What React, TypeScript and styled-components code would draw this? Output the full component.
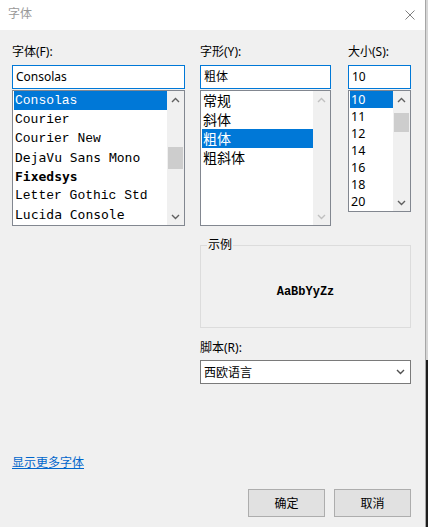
import React from 'react';
import styled, { createGlobalStyle } from 'styled-components';

const Global = createGlobalStyle`
  html, body { margin: 0; padding: 0; background: #f0f0f0; }
  body {
    font-family: "Noto Sans", "Noto Sans CJK SC", sans-serif;
    font-size: 12px;
    color: #000;
  }
  * { box-sizing: border-box; }
`;

const Page = styled.div`
  display: flex;
  width: 428px;
  height: 527px;
  overflow: hidden;
`;

const Dialog = styled.div`
  width: 425px;
  height: 527px;
  display: flex;
  flex-direction: column;
  background: #f0f0f0;
`;

const Backdrop = styled.div`
  width: 3px;
  display: flex;
  flex-direction: column;
  border-left: 1px solid #a6a6a6;
`;

const BackdropPart = styled.div<{ $dark?: boolean }>`
  height: ${(p) => (p.$dark ? 'auto' : '360px')};
  flex: ${(p) => (p.$dark ? 1 : 'none')};
  background: ${(p) => (p.$dark ? '#1e1e1e' : '#d6d6d6')};
`;

const TitleBar = styled.div`
  height: 30px;
  background: #fff;
  display: flex;
  align-items: center;
  justify-content: space-between;
  padding: 0 10px 0 8px;
`;

const Title = styled.span`
  color: #999;
  font-size: 12px;
  line-height: 16px;
  margin-top: -2px;
`;

const Body = styled.div`
  flex: 1;
  display: flex;
  flex-direction: column;
  padding: 0 14px 10px 12px;
`;

const Main = styled.div`
  display: flex;
  gap: 15px;
  margin-top: 14px;
`;

const Column = styled.div<{ $w: number }>`
  width: ${(p) => p.$w}px;
  display: flex;
  flex-direction: column;
`;

const Label = styled.div<{ $gap?: number }>`
  height: 16px;
  line-height: 16px;
  font-size: 12px;
  margin-bottom: ${(p) => p.$gap ?? 5}px;
  white-space: nowrap;
`;

const TextBox = styled.div`
  height: 24px;
  border: 1px solid #0078d7;
  background: #fff;
  padding: 0 3px;
  line-height: 22px;
  font-size: 12px;
`;

const ListBox = styled.div<{ $h: number }>`
  margin-top: 1px;
  height: ${(p) => p.$h}px;
  border: 1px solid #828790;
  background: #fff;
  display: flex;
`;

const Items = styled.div`
  flex: 1;
  padding: 0 0 0 1px;
  overflow: hidden;
`;

const Item = styled.div<{
  $h: number;
  $sel?: boolean;
  $font?: string;
  $weight?: number;
  $size?: number;
}>`
  height: ${(p) => p.$h}px;
  line-height: ${(p) => p.$h}px;
  padding-left: 1px;
  white-space: nowrap;
  overflow: hidden;
  font-family: ${(p) => p.$font ?? '"Noto Sans", "Noto Sans CJK SC", sans-serif'};
  font-weight: ${(p) => p.$weight ?? 400};
  font-size: ${(p) => p.$size ?? 12}px;
  background: ${(p) => (p.$sel ? '#0078d7' : 'transparent')};
  color: ${(p) => (p.$sel ? '#fff' : '#000')};
`;

const ScrollBar = styled.div`
  width: 17px;
  display: flex;
  flex-direction: column;
  background: #f0f0f0;
`;

const ArrowBox = styled.div`
  height: 17px;
  display: flex;
  align-items: center;
  justify-content: center;
`;

const Track = styled.div`
  flex: 1;
`;

const Thumb = styled.div<{ $top: number; $h: number }>`
  margin: ${(p) => p.$top}px 1px 0;
  height: ${(p) => p.$h}px;
  background: #cdcdcd;
`;

const Chevron: React.FC<{ up?: boolean; color: string }> = ({ up, color }) => (
  <svg width="9" height="6" viewBox="0 0 9 6">
    <path
      d={up ? 'M1 5 L4.5 1.5 L8 5' : 'M1 1 L4.5 4.5 L8 1'}
      fill="none"
      stroke={color}
      strokeWidth="1.4"
    />
  </svg>
);

const Scroller: React.FC<{ thumb?: { top: number; h: number } }> = ({ thumb }) => {
  const c = thumb ? '#606060' : '#c0c0c0';
  return (
    <ScrollBar>
      <ArrowBox>
        <Chevron up color={c} />
      </ArrowBox>
      <Track>{thumb && <Thumb $top={thumb.top} $h={thumb.h} />}</Track>
      <ArrowBox>
        <Chevron color={c} />
      </ArrowBox>
    </ScrollBar>
  );
};

const RightBlock = styled.div`
  width: 211px;
  display: flex;
  flex-direction: column;
`;

const TopRow = styled.div`
  display: flex;
  gap: 17px;
  align-items: flex-start;
`;

const Group = styled.fieldset`
  margin: 11px 0 0;
  padding: 0;
  border: 1px solid #dcdcdc;
  min-width: 0;
`;

const Legend = styled.legend`
  margin-left: 6px;
  padding: 0 1px;
  line-height: 16px;
  font-size: 12px;
`;

const SampleArea = styled.div`
  height: 74px;
  display: flex;
  align-items: center;
  justify-content: center;
  padding-top: 4px;
  font-family: "Liberation Mono", "DejaVu Sans Mono", monospace;
  font-weight: 700;
  font-size: 12px;
`;

const ScriptLabel = styled(Label)`
  margin-top: 12px;
`;

const Select = styled.div`
  height: 24px;
  border: 1px solid #7a7a7a;
  background: #fff;
  display: flex;
  align-items: center;
  justify-content: space-between;
  padding: 0 5px 0 3px;
  font-size: 12px;
`;

const LinkRow = styled.div`
  margin-top: 71px;
  line-height: 16px;
  height: 16px;
`;

const Link = styled.a`
  color: #0066cc;
  text-decoration: underline;
  font-size: 12px;
  cursor: pointer;
`;

const ButtonRow = styled.div`
  margin-top: 18px;
  display: flex;
  justify-content: flex-end;
  gap: 9px;
`;

const Button = styled.button`
  width: 77px;
  height: 28px;
  background: #e1e1e1;
  border: 1px solid #adadad;
  font-family: "Noto Sans", "Noto Sans CJK SC", sans-serif;
  font-size: 12px;
  color: #000;
  padding: 0;
`;

const fonts = [
  { name: 'Consolas', font: '"Liberation Mono", monospace', weight: 400 },
  { name: 'Courier', font: '"Liberation Mono", monospace', weight: 400 },
  { name: 'Courier New', font: '"Liberation Mono", monospace', weight: 400 },
  { name: 'DejaVu Sans Mono', font: '"DejaVu Sans Mono", monospace', weight: 400 },
  { name: 'Fixedsys', font: '"DejaVu Sans Mono", monospace', weight: 700 },
  { name: 'Letter Gothic Std', font: '"Liberation Mono", monospace', weight: 400 },
  { name: 'Lucida Console', font: '"DejaVu Sans Mono", monospace', weight: 400 },
];

const styles = ['常规', '斜体', '粗体', '粗斜体'];
const sizes = ['10', '11', '12', '14', '16', '18', '20'];

export default function App() {
  return (
    <Page>
      <Global />
      <Dialog>
        <TitleBar>
          <Title>字体</Title>
          <svg width="10" height="10" viewBox="0 0 10 10">
            <path d="M0.5 0.5 L9.5 9.5 M9.5 0.5 L0.5 9.5" stroke="#808080" strokeWidth="1" />
          </svg>
        </TitleBar>
        <Body>
          <Main>
            <Column $w={173}>
              <Label>字体(F):</Label>
              <TextBox>Consolas</TextBox>
              <ListBox $h={136}>
                <Items>
                  {fonts.map((f, i) => (
                    <Item
                      key={f.name}
                      $h={19}
                      $sel={i === 0}
                      $font={f.font}
                      $weight={f.weight}
                      $size={13}
                    >
                      {f.name}
                    </Item>
                  ))}
                </Items>
                <Scroller thumb={{ top: 39, h: 22 }} />
              </ListBox>
            </Column>
            <RightBlock>
              <TopRow>
                <Column $w={131}>
                  <Label>字形(Y):</Label>
                  <TextBox>粗体</TextBox>
                  <ListBox $h={136}>
                    <Items>
                      {styles.map((s, i) => (
                        <Item key={s} $h={19} $sel={i === 2} $size={14}>
                          {s}
                        </Item>
                      ))}
                    </Items>
                    <Scroller />
                  </ListBox>
                </Column>
                <Column $w={63}>
                  <Label>大小(S):</Label>
                  <TextBox>10</TextBox>
                  <ListBox $h={122}>
                    <Items>
                      {sizes.map((s, i) => (
                        <Item key={s} $h={17} $sel={i === 0} $size={12.5}>
                          {s}
                        </Item>
                      ))}
                    </Items>
                    <Scroller thumb={{ top: 5, h: 19 }} />
                  </ListBox>
                </Column>
              </TopRow>
              <Group>
                <Legend>示例</Legend>
                <SampleArea>AaBbYyZz</SampleArea>
              </Group>
              <ScriptLabel $gap={4}>脚本(R):</ScriptLabel>
              <Select>
                <span>西欧语言</span>
                <Chevron color="#505050" />
              </Select>
            </RightBlock>
          </Main>
          <LinkRow>
            <Link>显示更多字体</Link>
          </LinkRow>
          <ButtonRow>
            <Button>确定</Button>
            <Button>取消</Button>
          </ButtonRow>
        </Body>
      </Dialog>
      <Backdrop>
        <BackdropPart />
        <BackdropPart $dark />
      </Backdrop>
    </Page>
  );
}
